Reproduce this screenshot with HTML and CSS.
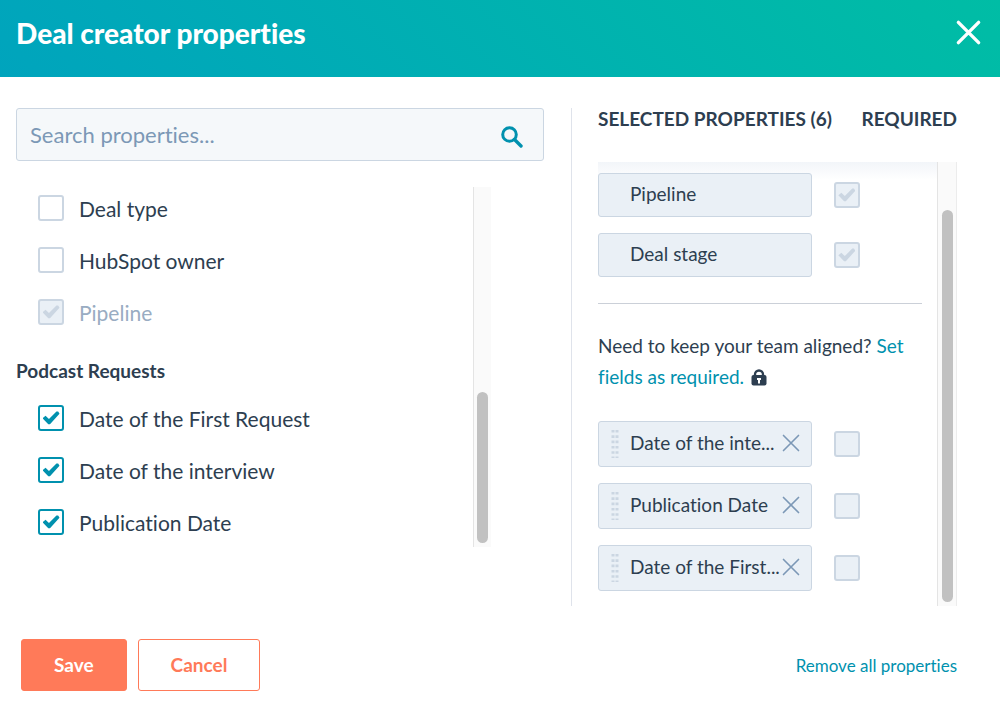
FILE: index.html
```html
<!DOCTYPE html>
<html lang="en">
<head>
<meta charset="utf-8">
<meta name="viewport" content="width=device-width, initial-scale=1">
<title>Deal creator properties</title>
<link rel="stylesheet" href="styles.css">
</head>
<body>
<svg class="sprite" aria-hidden="true">
  <symbol id="cross" viewBox="0 0 24 24"><path d="M3 3L21 21M21 3L3 21" fill="none" stroke="currentColor" stroke-linecap="round"/></symbol>
  <symbol id="grip" viewBox="0 0 8 30"><path d="M2 2V30M6 2V30" fill="none" stroke="currentColor" stroke-width="3" stroke-dasharray="2.6 2.7"/></symbol>
</svg>
<header class="header">
  <h1 class="title">Deal creator properties</h1>
  <button class="close" type="button" aria-label="Close"><svg><use href="#cross"/></svg></button>
</header>
<main class="main">
  <section class="available">
    <div class="search">
      <input class="search-input" type="text" placeholder="Search properties..." aria-label="Search properties">
      <svg class="search-icon" viewBox="0 0 22 22" aria-hidden="true"><circle cx="8.5" cy="8.5" r="6.8" fill="none" stroke="currentColor" stroke-width="3"/><path d="M13.5 13.5L20 20" stroke="currentColor" stroke-width="3.4" stroke-linecap="round"/></svg>
    </div>
    <div class="available-list">
      <div class="options">
        <label class="option"><input class="check" type="checkbox">Deal type</label>
        <label class="option"><input class="check" type="checkbox">HubSpot owner</label>
        <label class="option option-disabled"><input class="check" type="checkbox" checked disabled>Pipeline</label>
        <h2 class="group">Podcast Requests</h2>
        <label class="option"><input class="check" type="checkbox" checked>Date of the First Request</label>
        <label class="option"><input class="check" type="checkbox" checked>Date of the interview</label>
        <label class="option"><input class="check" type="checkbox" checked>Publication Date</label>
      </div>
      <div class="track"><div class="thumb thumb-short"></div></div>
    </div>
  </section>
  <section class="selected">
    <div class="selected-head"><h2 class="caption">SELECTED PROPERTIES (6)</h2><h2 class="caption">REQUIRED</h2></div>
    <div class="selected-list">
      <div class="selected-content">
        <div class="row"><div class="chip chip-fixed"><span class="chip-text">Pipeline</span></div><input class="check" type="checkbox" checked disabled aria-label="Pipeline required"></div>
        <div class="row"><div class="chip chip-fixed"><span class="chip-text">Deal stage</span></div><input class="check" type="checkbox" checked disabled aria-label="Deal stage required"></div>
        <hr class="rule">
        <p class="hint">Need to keep your team aligned? <a class="link" href="#">Set fields as required.</a> <svg class="lock" viewBox="0 0 16 17" aria-hidden="true"><path d="M4 8V5.5a4 4 0 0 1 8 0V8" fill="none" stroke="currentColor" stroke-width="2.4"/><rect x="0.5" y="6" width="15" height="10.5" rx="2" fill="currentColor"/><path d="M6 9h4v2H9v3.5H7V11H6z" fill="#fff"/></svg></p>
        <div class="row"><div class="chip"><svg class="grip"><use href="#grip"/></svg><span class="chip-text">Date of the inte...</span><button class="remove" type="button" aria-label="Remove Date of the interview"><svg><use href="#cross"/></svg></button></div><input class="check" type="checkbox" disabled aria-label="Date of the interview required"></div>
        <div class="row"><div class="chip"><svg class="grip"><use href="#grip"/></svg><span class="chip-text">Publication Date</span><button class="remove" type="button" aria-label="Remove Publication Date"><svg><use href="#cross"/></svg></button></div><input class="check" type="checkbox" disabled aria-label="Publication Date required"></div>
        <div class="row"><div class="chip"><svg class="grip"><use href="#grip"/></svg><span class="chip-text">Date of the First...</span><button class="remove" type="button" aria-label="Remove Date of the First Request"><svg><use href="#cross"/></svg></button></div><input class="check" type="checkbox" disabled aria-label="Date of the First Request required"></div>
      </div>
      <div class="track track-wide"><div class="thumb thumb-long"></div></div>
    </div>
  </section>
</main>
<footer class="footer">
  <button class="btn btn-primary" type="button">Save</button>
  <button class="btn" type="button">Cancel</button>
  <a class="link remove-all" href="#">Remove all properties</a>
</footer>
</body>
</html>
```

FILE: styles.css
```css
* { box-sizing: border-box; }
body { margin: 0; background: #fff; color: #2d3e50; font-family: Lato, "Liberation Sans", sans-serif; font-variant-ligatures: none; }
h1, h2, p { margin: 0; }
button { font: inherit; cursor: pointer; }
.sprite { position: absolute; width: 0; height: 0; }

.header { display: flex; align-items: center; justify-content: space-between; height: 77px; padding: 0 18px 12px 16px; background: linear-gradient(45deg, #00a4bd, #00bda5); color: #fff; }
.title { font-size: 28px; line-height: 36px; font-weight: 900; }
.close { display: flex; padding: 0; border: 0; background: none; color: #fff; stroke-width: 3; }
.close svg { width: 27px; height: 27px; }

.main { display: grid; grid-template-columns: minmax(0, 556fr) minmax(0, 385fr); padding: 31px 43px 0 16px; }
.available { padding-right: 27px; border-right: 1px solid #dfe3eb; }
.search { display: flex; align-items: center; height: 53px; padding: 0 20px 0 13px; border: 1px solid #cbd6e2; border-radius: 3px; background: #f5f8fa; }
.search-input { flex: 1; min-width: 0; padding: 0; border: 0; outline: 0; background: none; color: #2d3e50; font: inherit; font-size: 22px; }
.search-input::placeholder { color: #7c98b6; opacity: 1; }
.search-icon { width: 22px; height: 22px; margin-top: 4px; color: #0091ae; }

.available-list { display: flex; margin-top: 26px; width: 90%; }
.options { flex: 1; padding: 8px 0 12px; }
.option { display: flex; align-items: center; gap: 15px; height: 26px; margin: 0 0 26px 22px; font-size: 21px; }
.option:first-child { margin-top: 0; }
.option:last-child { margin-bottom: 0; }
.option-disabled { margin-bottom: 32px; color: #99acc2; }
.group { margin-bottom: 20px; font-size: 19px; line-height: 28px; font-weight: 700; }

.check { appearance: none; display: grid; place-items: center; flex: none; width: 26px; height: 26px; margin: 0; border: 2px solid #cbd6e2; border-radius: 3px; background: #fff; color: #0091ae; }
.check:checked { border-color: currentColor; }
.check:disabled, .check:checked:disabled { border-color: #cbd6e2; background: #eaf0f6; color: #cbd6e2; }
.check:checked::before { content: ""; width: 17px; height: 14px; background: currentColor; clip-path: polygon(0 52%, 18% 34%, 38% 58%, 82% 3%, 92% 3%, 100% 20%, 44% 94%, 34% 94%); }

.track { display: flex; flex-direction: column; justify-content: flex-end; align-items: center; width: 18px; padding: 4px 0; border-left: 1px solid #e4e4e4; background: #fafafa; }
.track-wide { width: 20px; border-right: 1px solid #ececec; }
.thumb { width: 11px; border-radius: 6px; background: #c1c1c1; }
.thumb-short { height: 43%; }
.thumb-long { height: 90%; }

.selected { padding-left: 26px; }
.selected-head { display: flex; justify-content: space-between; height: 54px; }
.caption { font-size: 19px; line-height: 22px; font-weight: 700; white-space: nowrap; }
.selected-list { display: flex; }
.selected-content { flex: 1; min-width: 0; padding: 11px 15px 15px 0; background: linear-gradient(#f2f5f9, #fff 18px); }
.row { display: flex; align-items: center; gap: 22px; margin-bottom: 16px; }
.row:last-child { margin-bottom: 0; }
.chip { display: flex; align-items: center; width: 66%; height: 46px; padding: 0 10px 2px 12px; border: 1px solid #cbd6e2; border-radius: 3px; background: #eaf0f6; }
.chip-fixed { height: 44px; padding-left: 31px; }
.grip { width: 8px; height: 30px; margin-right: 11px; color: #cbd6e2; flex: none; }
.chip-text { flex: 1; overflow: hidden; font-size: 19px; line-height: 28px; text-overflow: ellipsis; white-space: nowrap; }
.remove { display: flex; padding: 0; border: 0; background: none; color: #7c98b6; stroke-width: 2; }
.remove svg { width: 20px; height: 20px; }
.rule { height: 1px; margin: 26px 0; border: 0; background: #cbd0d8; }
.hint { margin-bottom: 29px; font-size: 19px; line-height: 31px; }
.link { color: #0091ae; text-decoration: none; }
.lock { width: 16px; height: 17px; margin-left: 2px; vertical-align: -2px; }

.footer { display: flex; align-items: center; gap: 11px; padding: 33px 43px 20px 21px; }
.btn { height: 52px; padding: 0 32px 2px; border: 1px solid #ff7a59; border-radius: 3px; background: #fff; color: #ff7a59; font-size: 19px; font-weight: 700; }
.btn-primary { background: #ff7a59; color: #fff; }
.remove-all { margin-left: auto; font-size: 17px; }
```
